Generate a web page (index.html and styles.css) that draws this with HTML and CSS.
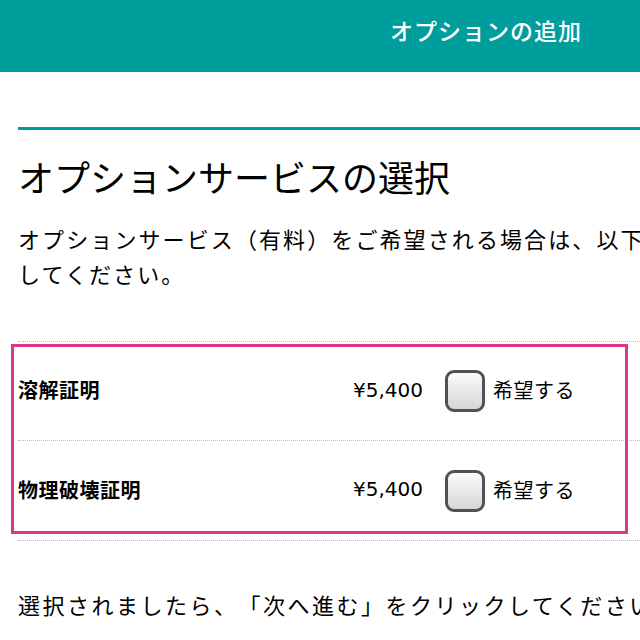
FILE: index.html
```html
<!DOCTYPE html>
<html lang="ja">
<head>
<meta charset="utf-8">
<title>オプションの追加</title>
<link rel="stylesheet" href="styles.css">
</head>
<body>
<header class="topbar">
  <h1 class="topbar-title">オプションの追加</h1>
</header>
<main class="content">
  <section class="section">
    <h2 class="section-title">オプションサービスの選択</h2>
    <p class="lead">オプションサービス（有料）をご希望される場合は、以下の項目にチェックしてください。</p>
    <div class="options">
      <label class="option-row">
        <span class="opt-name">溶解証明</span>
        <span class="opt-price">¥5,400</span>
        <input type="checkbox" class="chk">
        <span class="opt-label">希望する</span>
      </label>
      <label class="option-row">
        <span class="opt-name">物理破壊証明</span>
        <span class="opt-price">¥5,400</span>
        <input type="checkbox" class="chk">
        <span class="opt-label">希望する</span>
      </label>
      <div class="highlight"></div>
    </div>
    <p class="note">選択されましたら、「次へ進む」をクリックしてください。</p>
  </section>
</main>
</body>
</html>
```

FILE: styles.css
```css
html, body {
  margin: 0;
  padding: 0;
  overflow: hidden;
  background: #fff;
}
body {
  font-family: "Noto Sans CJK JP", "Noto Sans", sans-serif;
  color: #000;
  text-spacing-trim: space-all;
}
.topbar {
  height: 72px;
  background: #009d9d;
}
.topbar-title {
  margin: 0;
  padding: 16px 0 0 390px;
  font-size: 23px;
  line-height: 28px;
  letter-spacing: 1px;
  font-weight: 500;
  color: #fff;
  white-space: nowrap;
}
.content {
  width: 840px;
  padding-left: 18px;
  margin-top: 55px;
}
.section {
  border-top: 3px solid #009d9d;
}
.section-title {
  margin: 24px 0 0;
  font-size: 36px;
  line-height: 44px;
  font-weight: normal;
}
.lead {
  margin: 23px 0 0;
  font-size: 22px;
  line-height: 35px;
  letter-spacing: 2.1px;
}
.options {
  position: relative;
  margin-top: 50px;
  border-top: 1px dotted #bbb;
}
.option-row {
  display: flex;
  align-items: center;
  height: 98px;
  border-bottom: 1px dotted #bbb;
  font-size: 20px;
  letter-spacing: 0.5px;
}
.option-row + .option-row {
  height: 99px;
}
.opt-name {
  width: 320px;
  font-weight: bold;
  margin-top: -3px;
}
.opt-price {
  width: 85px;
  text-align: right;
  font-family: "DejaVu Sans", sans-serif;
  letter-spacing: 0;
  margin-top: -3px;
}
.chk {
  appearance: none;
  -webkit-appearance: none;
  margin: 0 0 0 22px;
  width: 40px;
  height: 42px;
  box-sizing: border-box;
  border: 3px solid #525252;
  border-radius: 9px;
  background: linear-gradient(#fbfbfb, #d6d6d6);
}
.opt-label {
  margin-left: 8px;
  margin-top: -3px;
}
.highlight {
  position: absolute;
  left: -7px;
  top: 2px;
  width: 617px;
  height: 190px;
  box-sizing: border-box;
  border: 3px solid #e0378a;
  pointer-events: none;
}
.note {
  margin: 46px 0 0;
  font-size: 22px;
  line-height: 35px;
  letter-spacing: 2.5px;
}
```
